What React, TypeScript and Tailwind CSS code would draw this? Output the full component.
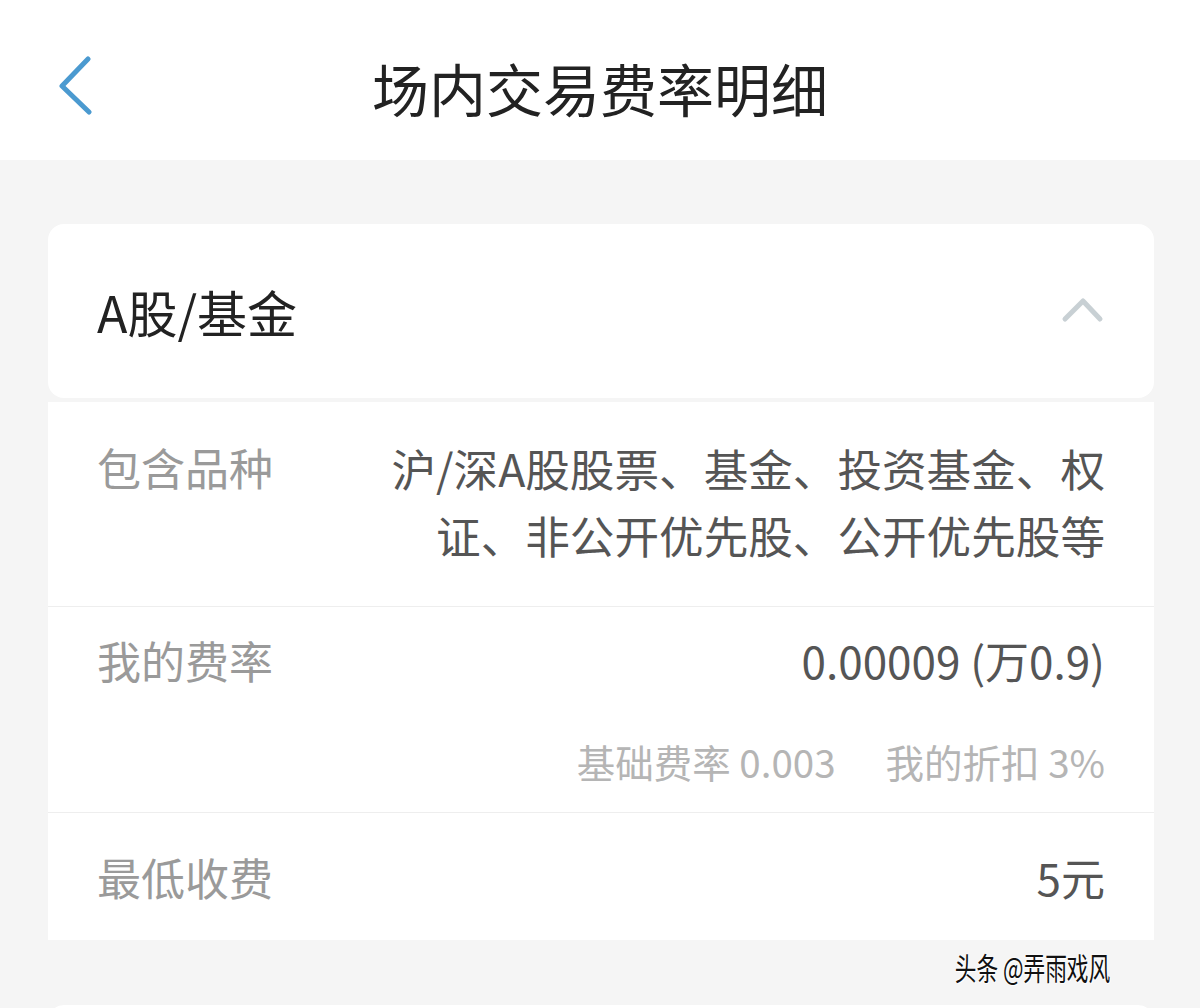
import React from "react";

const FONT = { fontFamily: '"Noto Sans CJK SC", "Noto Sans", sans-serif' };

function BackIcon() {
  return (
    <svg width="40" height="64" viewBox="0 0 40 64" fill="none">
      <path d="M30 3 L4 30 L31 56" stroke="#4b9ad0" strokeWidth="5" strokeLinecap="round" strokeLinejoin="round" />
    </svg>
  );
}

function ChevronUp() {
  return (
    <svg width="44" height="28" viewBox="0 0 44 28" fill="none">
      <path d="M4 22 L22 4 L39 22" stroke="#c8d0d4" strokeWidth="5" strokeLinecap="round" strokeLinejoin="round" />
    </svg>
  );
}

export default function App() {
  return (
    <div className="relative w-[1200px] h-[1008px] overflow-hidden bg-[#f5f5f5]" style={FONT}>
      <header className="h-[160px] bg-white flex items-center relative">
        <div className="absolute left-[58px] top-[56px]">
          <BackIcon />
        </div>
        <h1 className="w-full text-center text-[57px] leading-none text-[#222] font-normal pt-[14px]">场内交易费率明细</h1>
      </header>

      <div className="mx-[48px] mt-[64px] w-[1106px]">
        <div className="h-[174px] bg-white rounded-[16px] flex items-center justify-between px-[49px]">
          <span className="text-[50px] leading-none text-[#222]">A股/基金</span>
          <ChevronUp />
        </div>

        <div className="bg-white mt-[4px]">
          <div className="flex justify-between px-[49px] pt-[32px] pb-[38px] border-b border-[#eeeeee]">
            <span className="text-[44px] leading-[67px] text-[#9a9a9a]">包含品种</span>
            <span className="text-[44.6px] leading-[67px] text-[#555] text-right">
              沪/深A股股票、基金、投资基金、权
              <br />
              证、非公开优先股、公开优先股等
            </span>
          </div>

          <div className="px-[49px] pt-[20px] pb-[22px] border-b border-[#eeeeee]">
            <div className="flex justify-between">
              <span className="text-[44px] leading-[67px] text-[#9a9a9a]">我的费率</span>
              <span className="text-[44px] leading-[67px] text-[#555]">0.00009 (万0.9)</span>
            </div>
            <div className="flex justify-end gap-[50px] mt-[38px] text-[38.5px] leading-[58px] text-[#b5b5b5]">
              <span>基础费率 0.003</span>
              <span>我的折扣 3%</span>
            </div>
          </div>

          <div className="h-[127px] flex items-center justify-between px-[49px]">
            <span className="text-[44px] leading-none text-[#9a9a9a]">最低收费</span>
            <span className="text-[44px] leading-none text-[#555]">5元</span>
          </div>
        </div>

        <div className="mt-[65px] h-[20px] bg-white rounded-t-[16px]" />
      </div>

      <div
        className="absolute right-[90px] top-[946px] text-[31px] leading-[42px] text-[#111] origin-right scale-x-[0.7]"
        style={{ textShadow: "0 0 3px #fff, 0 0 3px #fff, 1px 1px 0 #fff" }}
      >
        头条 @弄雨戏风
      </div>
    </div>
  );
}
